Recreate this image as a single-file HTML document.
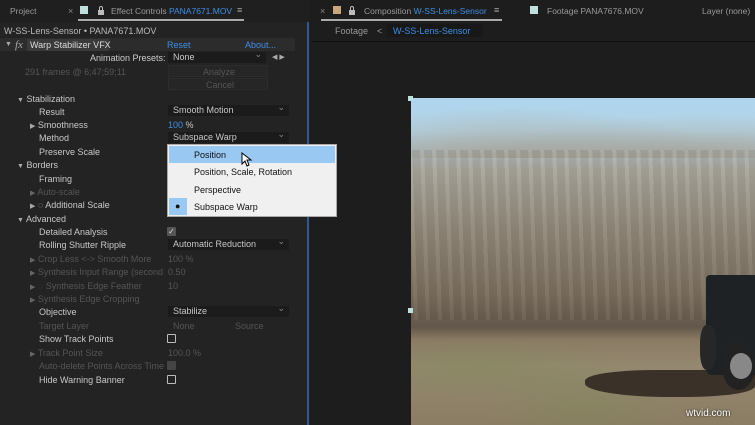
<!DOCTYPE html>
<html><head><meta charset="utf-8"><style>
*{margin:0;padding:0;box-sizing:border-box}
body{width:755px;height:425px;background:#1d1d1d;overflow:hidden;position:relative;font-family:"Liberation Sans",sans-serif;font-size:9px;color:#c8c8c8}
.a{position:absolute;white-space:nowrap}
.dim{color:#555}
.blue{color:#3d8ee6}
.dd{position:absolute;background:#1b1b1b;height:11px;color:#c8c8c8;padding-left:5px;line-height:11px}
.dd:after{content:"\2304";position:absolute;right:4px;top:-3px;color:#888;font-size:9px}
.cb{position:absolute;width:9px;height:9px;border:1px solid #bbb;border-radius:1px}
.tri{color:#aaa;font-size:7px}
.lock{position:absolute;width:6px;height:5px;background:#bbb}
.lock:before{content:"";position:absolute;left:1px;top:-4px;width:4px;height:4px;border:1px solid #bbb;border-bottom:none;border-radius:2px 2px 0 0;box-sizing:border-box}
.tab{font-size:8.5px}
</style></head><body>
<div class="a" style="left:0;top:0;width:309px;height:425px;background:#232323;border-right:2px solid #2d5a95"></div>
<div class="a" style="left:0;top:0;width:309px;height:22px;background:#1f1f1f"></div>
<div class="a tab" style="left:10px;top:6px;color:#9a9a9a">Project</div>
<div class="a" style="left:68px;top:6px;color:#888">×</div>
<div class="a" style="left:80px;top:6px;width:8px;height:8px;background:#bfe0dc"></div>
<div class="lock" style="left:98px;top:10px"></div>
<div class="a tab" style="left:111px;top:6px;color:#9a9a9a">Effect Controls <span class="blue">PANA7671.MOV</span></div>
<div class="a" style="left:237px;top:5px;color:#aaa">≡</div>
<div class="a" style="left:78px;top:19px;width:166px;height:2px;background:#aaa"></div>
<div class="a" style="left:4px;top:26px;color:#bbb">W-SS-Lens-Sensor • PANA7671.MOV</div>
<div class="a" style="left:0;top:38px;width:295px;height:13px;background:#2c2c2c"></div>
<div class="a tri" style="left:5px;top:41px">▼</div>
<div class="a" style="left:15px;top:39px;color:#aaa;font-style:italic;font-family:'Liberation Serif',serif;font-size:11px">fx</div>
<div class="a" style="left:27px;top:39px;width:82px;height:12px;background:#3a3a3a"></div>
<div class="a" style="left:30px;top:40px;color:#ddd">Warp Stabilizer VFX</div>
<div class="a blue" style="left:167px;top:40px">Reset</div>
<div class="a blue" style="left:245px;top:40px">About...</div>
<div class="a" style="left:90px;top:53px;color:#ccc">Animation Presets:</div>
<div class="dd" style="left:168px;top:52px;width:98px">None</div>
<div class="a" style="left:272px;top:53px;color:#aaa;font-size:7px">◀ ▶</div>
<div class="a dim" style="left:25px;top:67px">291 frames @ 6;47;59;11</div>
<div class="a" style="left:168px;top:65px;width:100px;height:12px;background:#262626;border:1px solid #2c2c2c"></div>
<div class="a dim" style="left:203px;top:67px">Analyze</div>
<div class="a" style="left:168px;top:78px;width:100px;height:12px;background:#262626;border:1px solid #2c2c2c"></div>
<div class="a dim" style="left:206px;top:80px">Cancel</div>

<div class="a" style="left:17px;top:94px"><span class="tri">▼</span> Stabilization</div>
<div class="a" style="left:39px;top:107px">Result</div>
<div class="dd" style="left:168px;top:105px;width:121px">Smooth Motion</div>
<div class="a" style="left:30px;top:120px"><span class="tri">▶</span> Smoothness</div>
<div class="a" style="left:168px;top:120px"><span class="blue">100</span> %</div>
<div class="a" style="left:39px;top:133px">Method</div>
<div class="dd" style="left:168px;top:132px;width:121px">Subspace Warp</div>
<div class="a" style="left:39px;top:147px">Preserve Scale</div>
<div class="a" style="left:17px;top:160px"><span class="tri">▼</span> Borders</div>
<div class="a" style="left:39px;top:174px">Framing</div>
<div class="a dim" style="left:30px;top:187px"><span class="tri" style="color:#666">▶</span> Auto-scale</div>
<div class="a" style="left:30px;top:200px"><span class="tri">▶</span> ◌ Additional Scale</div>
<div class="a" style="left:17px;top:214px"><span class="tri">▼</span> Advanced</div>
<div class="a" style="left:39px;top:227px">Detailed Analysis</div>
<div class="cb" style="left:167px;top:227px;background:#555;border-color:#555;color:#ddd;font-size:8px;line-height:7px;text-align:center">✓</div>
<div class="a" style="left:39px;top:240px">Rolling Shutter Ripple</div>
<div class="dd" style="left:168px;top:239px;width:121px">Automatic Reduction</div>
<div class="a dim" style="left:30px;top:254px"><span class="tri" style="color:#666">▶</span> Crop Less &lt;-&gt; Smooth More</div>
<div class="a dim" style="left:168px;top:254px">100 %</div>
<div class="a dim" style="left:30px;top:267px;width:133px;overflow:hidden"><span class="tri" style="color:#666">▶</span> Synthesis Input Range (seconds</div>
<div class="a dim" style="left:168px;top:267px">0.50</div>
<div class="a dim" style="left:30px;top:281px"><span class="tri" style="color:#666">▶</span> ◌ Synthesis Edge Feather</div>
<div class="a dim" style="left:168px;top:281px">10</div>
<div class="a dim" style="left:30px;top:294px"><span class="tri" style="color:#666">▶</span> Synthesis Edge Cropping</div>
<div class="a" style="left:39px;top:307px">Objective</div>
<div class="dd" style="left:168px;top:306px;width:121px">Stabilize</div>
<div class="a dim" style="left:39px;top:321px">Target Layer</div>
<div class="a dim" style="left:173px;top:321px">None</div>
<div class="a dim" style="left:235px;top:321px">Source</div>
<div class="a" style="left:39px;top:334px">Show Track Points</div>
<div class="cb" style="left:167px;top:334px"></div>
<div class="a dim" style="left:30px;top:348px"><span class="tri" style="color:#666">▶</span> Track Point Size</div>
<div class="a dim" style="left:168px;top:348px">100.0 %</div>
<div class="a dim" style="left:39px;top:361px">Auto-delete Points Across Time</div>
<div class="cb" style="left:167px;top:361px;background:#444;border-color:#444"></div>
<div class="a" style="left:39px;top:375px">Hide Warning Banner</div>
<div class="cb" style="left:167px;top:375px"></div>

<div class="a" style="left:167px;top:144px;width:170px;height:73px;background:#f0f0f0;border:1px solid #aaa"></div>
<div class="a" style="left:169px;top:146px;width:166px;height:17px;background:#99c9f3"></div>
<div class="a" style="left:169px;top:198px;width:18px;height:17px;background:#99c9f3"></div>
<div class="a" style="left:175px;top:201px;color:#111">●</div>
<div class="a" style="left:194px;top:150px;color:#111">Position</div>
<div class="a" style="left:194px;top:167px;color:#111">Position, Scale, Rotation</div>
<div class="a" style="left:194px;top:185px;color:#111">Perspective</div>
<div class="a" style="left:194px;top:202px;color:#111">Subspace Warp</div>
<svg class="a" style="left:241px;top:152px" width="12" height="16"><path d="M1 1 L1 12 L4 9 L6 14 L8 13 L6 8 L10 8 Z" fill="#fff" stroke="#000" stroke-width="1"/></svg>

<div class="a" style="left:320px;top:6px;color:#888">×</div>
<div class="a" style="left:333px;top:6px;width:8px;height:8px;background:#c9a77a"></div>
<div class="lock" style="left:349px;top:10px"></div>
<div class="a tab" style="left:364px;top:6px;color:#9a9a9a">Composition <span class="blue">W-SS-Lens-Sensor</span></div>
<div class="a" style="left:494px;top:5px;color:#aaa">≡</div>
<div class="a" style="left:321px;top:19px;width:181px;height:2px;background:#aaa"></div>
<div class="a" style="left:530px;top:6px;width:8px;height:8px;background:#bfe0dc"></div>
<div class="a tab" style="left:547px;top:6px;color:#9a9a9a">Footage PANA7676.MOV</div>
<div class="a tab" style="left:702px;top:6px;color:#9a9a9a">Layer (none)</div>
<div class="a" style="left:335px;top:26px;color:#999">Footage</div>
<div class="a" style="left:377px;top:26px;color:#999">&lt;</div>
<div class="a" style="left:387px;top:24px;width:96px;height:13px;background:#181818"></div>
<div class="a blue" style="left:393px;top:26px">W-SS-Lens-Sensor</div>
<div class="a" style="left:311px;top:41px;width:444px;height:1px;background:#111"></div>

<div class="a" style="left:411px;top:98px;width:344px;height:327px;background:linear-gradient(180deg,#aed5ef 0%,#b5d4e4 10%,#aaa89e 22%,#928a7c 40%,#7a6e5e 60%,#62574a 70%,#8a7b64 74%,#958870 82%,#8b7d64 100%)"></div>
<div class="a" style="left:411px;top:98px;width:344px;height:60px;background:radial-gradient(ellipse at 30% 100%,rgba(160,150,135,.6),transparent 60%),radial-gradient(ellipse at 85% 90%,rgba(160,150,135,.5),transparent 50%)"></div>
<div class="a" style="left:411px;top:150px;width:344px;height:170px;background:repeating-linear-gradient(88deg,rgba(80,70,58,.12) 0 3px,rgba(200,190,170,.08) 3px 7px,rgba(60,50,40,.1) 7px 12px)"></div>
<div class="a" style="left:411px;top:330px;width:344px;height:95px;background:radial-gradient(ellipse at 20% 40%,rgba(120,140,80,.35),transparent 40%),radial-gradient(ellipse at 50% 80%,rgba(120,140,80,.3),transparent 40%)"></div>
<div class="a" style="left:585px;top:370px;width:170px;height:27px;background:#3a3128;border-radius:40% 20% 40% 50%"></div>
<div class="a" style="left:706px;top:275px;width:49px;height:100px;background:#1f2224;border-radius:4px 0 0 6px"></div>
<div class="a" style="left:722px;top:342px;width:33px;height:48px;background:#222;border-radius:50%"></div>
<div class="a" style="left:730px;top:353px;width:22px;height:26px;background:#888;border-radius:50%"></div>
<div class="a" style="left:700px;top:325px;width:16px;height:45px;background:#272727;border-radius:40%"></div>
<div class="a" style="left:686px;top:408px;color:#fff;font-size:10px;text-shadow:0 0 2px #000">wtvid.com</div>
<div class="a" style="left:408px;top:96px;width:5px;height:5px;background:#bde0dc"></div>
<div class="a" style="left:408px;top:308px;width:5px;height:5px;background:#bde0dc"></div>
</body></html>
